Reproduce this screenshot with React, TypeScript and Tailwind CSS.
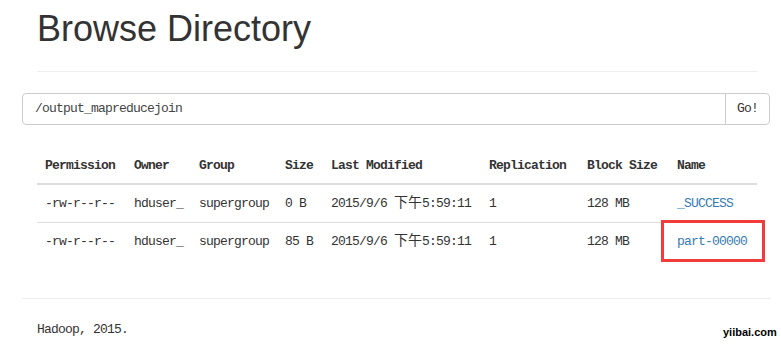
import React from 'react';

const mono = { fontFamily: '"Liberation Mono", "Noto Sans CJK SC", monospace' };

interface FileRow {
  permission: string;
  owner: string;
  group: string;
  size: string;
  date: string;
  time: string;
  replication: string;
  blockSize: string;
  name: string;
}

const rows: FileRow[] = [
  {
    permission: '-rw-r--r--',
    owner: 'hduser_',
    group: 'supergroup',
    size: '0 B',
    date: '2015/9/6 ',
    time: '5:59:11',
    replication: '1',
    blockSize: '128 MB',
    name: '_SUCCESS'
  },
  {
    permission: '-rw-r--r--',
    owner: 'hduser_',
    group: 'supergroup',
    size: '85 B',
    date: '2015/9/6 ',
    time: '5:59:11',
    replication: '1',
    blockSize: '128 MB',
    name: 'part-00000'
  }
];

const headers = ['Permission', 'Owner', 'Group', 'Size', 'Last Modified', 'Replication', 'Block Size', 'Name'];
const widths = [89, 65, 86, 46, 158, 98, 90, 88];

export default function App() {
  return (
    <div className="relative w-[781px] h-[344px] overflow-hidden bg-white text-[#333]">
      {/* Titolo */}
      <div className="px-[37px] pt-[9px]">
        <h1
          className="text-[36px] leading-[40px] font-normal text-[#333]"
          style={{ fontFamily: '"Liberation Sans", Arial, sans-serif' }}
        >
          Browse Directory
        </h1>
      </div>
      <div className="ml-[37px] mr-[24px] mt-[22px] border-b border-[#eee]" />

      {/* Barra percorso */}
      <div className="ml-[22px] mr-[11px] mt-[21px] flex h-[32px] rounded-[4px] border border-[#ccc] text-[14px]" style={mono}>
        <div className="flex-1 flex items-center pl-[12px] text-[13px] tracking-[-0.8px] text-[#444]">
          /output_mapreducejoin
        </div>
        <div className="w-[44px] flex items-center justify-center border-l border-[#ccc] text-[13px] tracking-[-0.8px] text-[#333]">
          Go!
        </div>
      </div>

      {/* Tabella file */}
      <div className="ml-[37px] mt-[22px]">
        <table className="w-[720px] table-fixed border-collapse text-left text-[13px] tracking-[-0.8px]" style={mono}>
          <colgroup>
            {widths.map((w, i) => (
              <col key={i} style={{ width: w }} />
            ))}
          </colgroup>
          <thead>
            <tr>
              {headers.map((h) => (
                <th key={h} className="px-2 pt-[9px] pb-[7px] leading-5 font-bold border-b-2 border-[#ddd] whitespace-nowrap">
                  {h}
                </th>
              ))}
            </tr>
          </thead>
          <tbody>
            {rows.map((r) => (
              <tr key={r.name}>
                <td className="px-2 py-2 leading-5 border-t border-[#ddd] whitespace-nowrap">{r.permission}</td>
                <td className="px-2 py-2 leading-5 border-t border-[#ddd] whitespace-nowrap">{r.owner}</td>
                <td className="px-2 py-2 leading-5 border-t border-[#ddd] whitespace-nowrap">{r.group}</td>
                <td className="px-2 py-2 leading-5 border-t border-[#ddd] whitespace-nowrap">{r.size}</td>
                <td className="px-2 py-2 leading-5 border-t border-[#ddd] whitespace-nowrap">
                  {r.date}
                  <span className="text-[14px] tracking-normal">下午</span>
                  {r.time}
                </td>
                <td className="px-2 py-2 leading-5 border-t border-[#ddd] whitespace-nowrap">{r.replication}</td>
                <td className="px-2 py-2 leading-5 border-t border-[#ddd] whitespace-nowrap">{r.blockSize}</td>
                <td className="px-2 py-2 leading-5 border-t border-[#ddd] whitespace-nowrap text-[#337ab7]">{r.name}</td>
              </tr>
            ))}
          </tbody>
        </table>
      </div>

      {/* Footer */}
      <div className="ml-[22px] mr-[10px] mt-[38px] border-b border-[#eee]" />
      <div className="pl-[37px] mt-[21px] text-[13px] leading-5 tracking-[-0.8px] text-[#333]" style={mono}>
        Hadoop, 2015.
      </div>

      {/* Evidenziazione */}
      <div className="absolute left-[661px] top-[220px] w-[104px] h-[42px] border-[3px] border-[#f23b3b]" />

      {/* Watermark */}
      <div
        className="absolute left-[723px] top-[325px] text-[11px] leading-[14px] font-bold text-black"
        style={{ fontFamily: '"Liberation Sans", Arial, sans-serif' }}
      >
        yiibai.com
      </div>
    </div>
  );
}
